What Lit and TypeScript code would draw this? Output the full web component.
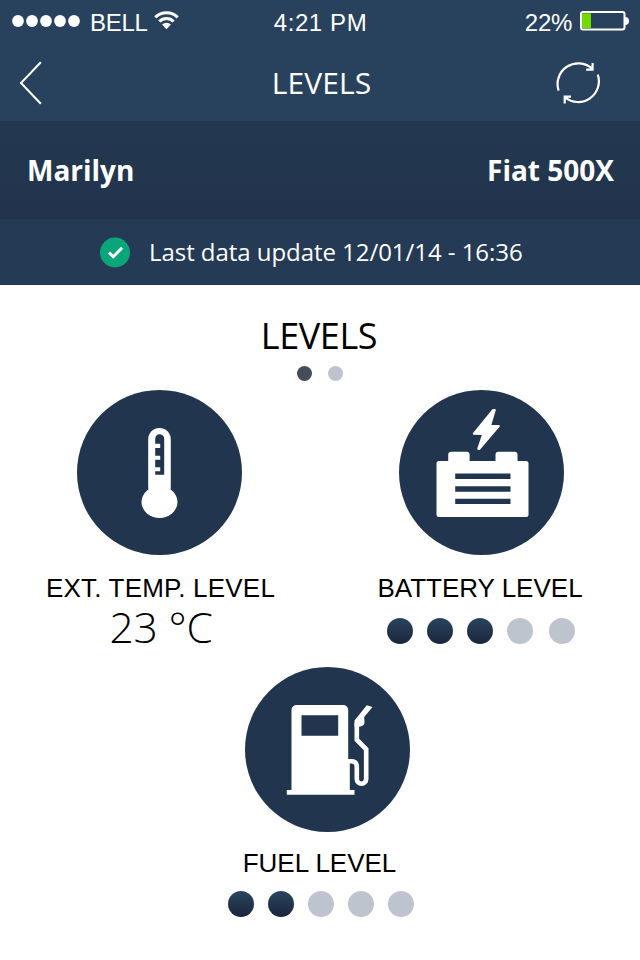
import { LitElement, html, css, svg } from "lit";
import { customElement, property } from "lit/decorators.js";

@customElement("level-dots")
class LevelDots extends LitElement {
  @property({ type: Number }) value = 0;
  @property({ type: Number }) total = 5;

  static styles = css`
    :host { display: flex; gap: 14px; }
    .dot { width: 26px; height: 26px; border-radius: 50%; background: #bec4cd; }
    .on { background: linear-gradient(#29455f, #1b253c); }
    :host([spread]) .dot:last-child { margin-left: 2px; }
  `;

  render() {
    return Array.from({ length: this.total }, (_, i) =>
      html`<span class="dot ${i < this.value ? "on" : ""}"></span>`);
  }
}

const thermometer = svg`
  <rect x="71.2" y="38" width="22.6" height="70" rx="11.3" fill="#fff"/>
  <ellipse cx="82.5" cy="112" rx="18" ry="16" fill="#fff"/>
  <path fill="#22354e" d="M78.2 48.8a4.5 4.5 0 0 1 9 0V84.7h-9v-3.4h5v-4h-5v-7.6h5v-4h-5V58h5v-4.3h-5z"/>`;

const battery = svg`
  <path fill="#fff" stroke="#fff" stroke-width="2" stroke-linejoin="round"
    d="M94.2 20h1.6L91 36h8.8L80.2 59l-1-.3L84.2 44l-9.4-.3z"/>
  <rect x="49.2" y="61.7" width="21.4" height="14" rx="3" fill="#fff"/>
  <rect x="96.5" y="61.7" width="22" height="14" rx="3" fill="#fff"/>
  <rect x="37.5" y="71" width="92" height="56" rx="2.5" fill="#fff"/>
  <path fill="#22354e" d="M56.2 83.6h55.3v5.4H56.2zM56.2 96.3h55.3v5.4H56.2zM56.2 108.7h55.3v5.4H56.2z"/>`;

const pump = svg`
  <path fill="#fff" fill-rule="evenodd"
    d="M46.5 43a5 5 0 0 1 5-5h46.7a5 5 0 0 1 5 5v49h1.6v31h4.7v4.7H41.8V123h4.7zM56.5 48.3v20.4h36.7V48.3z"/>
  <path fill="none" stroke="#fff" stroke-width="4.6"
    d="M103 94.3h3.2q5.6 0 5.6 5.6V112a4.7 4.7 0 0 0 9.4 0V82.3L111.8 72.7V56"/>
  <path fill="#fff" d="M121.8 38.3l5.7 1.7-8.3 9.9.3 6.4q-.8 3-5.2 3.4h-4.8v-6.2z"/>`;

@customElement("app-root")
class AppRoot extends LitElement {
  static styles = css`
    :host {
      display: block; width: 640px; height: 960px; overflow: hidden;
      background: #fff; color: #000;
      font-family: "Open Sans", "Noto Sans", sans-serif;
    }
    svg { display: block; flex: none; }
    .top { height: 121px; background: #28425d; color: #fff; border-bottom: 1px solid #22384f; }
    .status {
      height: 45px; display: grid; grid-template-columns: 1fr auto 1fr;
      align-items: center; padding: 0 12px;
      font: 24px/45px "Liberation Sans", Arial, sans-serif;
    }
    .carrier, .power { display: flex; align-items: center; }
    .power { justify-content: flex-end; }
    .signal { margin: -4px 10px 0 0; }
    .bell { letter-spacing: -0.3px; }
    .wifi { margin: -5px 0 0 6px; }
    .time { letter-spacing: 0.6px; margin-left: 1px; }
    .pct { letter-spacing: -0.3px; margin-right: 8px; }
    .cell { margin: -4px -1px 0 0; }
    .nav {
      height: 76px; display: grid; grid-template-columns: 1fr auto 1fr;
      align-items: center; padding: 0 39px 0 19px;
    }
    .title { font-size: 30px; line-height: 76px; padding-left: 23px; letter-spacing: 0.1px; }
    .refresh { justify-self: end; }
    .owner {
      height: 96px; display: flex; justify-content: space-between; padding: 0 26px 0 27px;
      background: linear-gradient(#22384f, #22344d); color: #fff;
      border-bottom: 1px solid #1f3148;
      font-size: 28px; font-weight: 700; line-height: 97px;
    }
    .update {
      height: 66px; display: flex; align-items: center;
      background: #243a55; color: #fff; padding-left: 100px;
      font-size: 24px; line-height: 66px;
    }
    .when { margin-left: 19px; white-space: nowrap; letter-spacing: -0.05px; }
    .heading {
      margin: 0 2px 0 0; padding-top: 26px; text-align: center;
      font-size: 36px; line-height: 50px; font-weight: 400; letter-spacing: -0.4px;
    }
    .pager { display: flex; justify-content: center; gap: 16px; height: 15px; margin-top: 5px; }
    .page { width: 15px; height: 15px; border-radius: 50%; background: #bec4cd; }
    .current { background: #434e5a; }
    .row { display: flex; justify-content: space-between; padding: 0 39px; margin-top: 9px; }
    .card { width: 240px; display: flex; flex-direction: column; align-items: center; }
    .label {
      font: 26px/30px "Liberation Sans", Arial, sans-serif;
      margin-top: 18px; white-space: nowrap;
    }
    .ext { letter-spacing: 0.2px; margin-left: 3px; }
    .row .batt { margin-right: 2px; }
    .value { font-size: 42.5px; font-weight: 300; line-height: 48px; margin-left: 4px; letter-spacing: -0.2px; }
    .gauge { margin-top: 15px; }
    .fuel { margin: 16px 0 0 207px; }
    .fuel .label { margin: 16px 0 0 -15px; }
    .fuel .gauge { margin: 13px 0 0 -12px; }
  `;

  disc(icon: unknown) {
    return html`<svg width="165" height="165" viewBox="0 0 165 165">
      <circle cx="82.5" cy="82.5" r="82.5" fill="#22354e"/>${icon}</svg>`;
  }

  render() {
    return html`
      <header class="top">
        <div class="status">
          <div class="carrier">
            <svg class="signal" width="68" height="12" viewBox="0 0 68 12" fill="#fff">
              ${[6, 20, 34, 48, 62].map(x => svg`<circle cx=${x} cy="6" r="5.9"/>`)}
            </svg>
            <span class="bell">BELL</span>
            <svg class="wifi" width="25" height="20" viewBox="0 0 26 20">
              <g fill="none" stroke="#fff" stroke-width="3.2">
                <path d="M1.4 7.2a16.4 16.4 0 0 1 23.2 0"/>
                <path d="M5.6 11.6a10.4 10.4 0 0 1 14.8 0"/>
              </g>
              <path fill="#fff" d="M13 19.6l-4.6-4.8a6.4 6.4 0 0 1 9.2 0z"/>
            </svg>
          </div>
          <div class="time">4:21 PM</div>
          <div class="power">
            <span class="pct">22%</span>
            <svg class="cell" width="49" height="20" viewBox="0 0 49 20">
              <rect x="1" y="1" width="43.5" height="17.6" rx="2" fill="none" stroke="#fff" stroke-width="2"/>
              <path fill="#fff" d="M45 6a4 4 0 0 1 0 8z"/>
              <rect x="2" y="2.3" width="9" height="15" fill="#70d900"/>
            </svg>
          </div>
        </div>
        <div class="nav">
          <svg width="24" height="44" viewBox="0 0 24 44">
            <path d="M21.8 1.2L2 22l19.8 20.8" fill="none" stroke="#fff" stroke-width="2"/>
          </svg>
          <div class="title">LEVELS</div>
          <svg class="refresh" width="46" height="44" viewBox="0 0 46 44" fill="none" stroke="#fff" stroke-width="2.2">
            <path d="M3.6 29.6A20.8 20.8 0 0 1 37 7.4M37.6 2V8.6H31M42.8 13.6A20.8 20.8 0 0 1 10 36.4M16 35.6H9.7V42.4"/>
          </svg>
        </div>
      </header>
      <section class="owner"><span>Marilyn</span><span>Fiat 500X</span></section>
      <section class="update">
        <svg width="30" height="31" viewBox="0 0 30 31">
          <circle cx="15" cy="15.5" r="15" fill="#08a679"/>
          <path d="M9 15.5l4.3 4.2 8.8-8.9" fill="none" stroke="#fff" stroke-width="3"/>
        </svg>
        <span class="when">Last data update 12/01/14 - 16:36</span>
      </section>
      <main>
        <h1 class="heading">LEVELS</h1>
        <div class="pager"><span class="page current"></span><span class="page"></span></div>
        <div class="row">
          <section class="card">
            ${this.disc(thermometer)}
            <div class="label ext">EXT. TEMP. LEVEL</div>
            <div class="value">23 °C</div>
          </section>
          <section class="card">
            ${this.disc(battery)}
            <div class="label batt">BATTERY LEVEL</div>
            <level-dots class="gauge" spread value="3"></level-dots>
          </section>
        </div>
        <section class="card fuel">
          ${this.disc(pump)}
          <div class="label">FUEL LEVEL</div>
          <level-dots class="gauge" value="2"></level-dots>
        </section>
      </main>`;
  }
}
